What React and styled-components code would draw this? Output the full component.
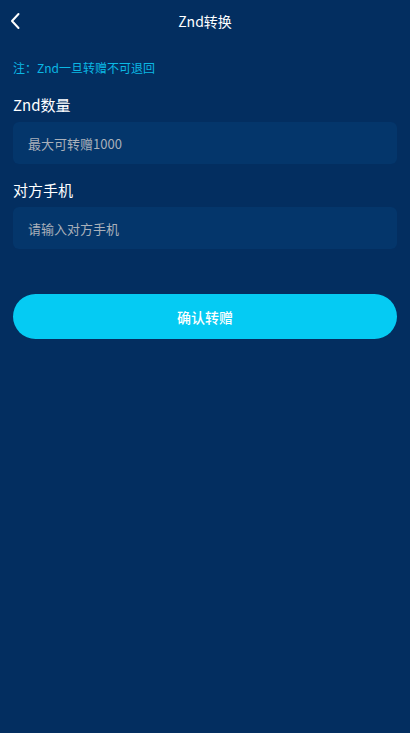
import React from "react";
import styled, { createGlobalStyle } from "styled-components";

const Global = createGlobalStyle`
  html, body { margin: 0; padding: 0; background: #032e60; }
  body { font-family: "Microsoft YaHei", "Noto Sans CJK SC", "Liberation Sans", sans-serif; }
  * { box-sizing: border-box; }
`;

const Page = styled.div`
  min-height: 733px;
  background: #032e60;
  color: #fff;
`;

const Header = styled.header`
  position: relative;
  height: 44px;
  display: flex;
  align-items: center;
  justify-content: center;
`;

const Back = styled.button`
  position: absolute;
  left: 6px;
  top: 10px;
  width: 18px;
  height: 22px;
  padding: 0;
  border: 0;
  background: transparent;
  display: flex;
  align-items: center;
  justify-content: center;
`;

const Title = styled.h1`
  margin: 0;
  font-size: 14px;
  font-weight: 400;
  color: #fff;
  line-height: 20px;
  margin-top: -2px;
`;

const Body = styled.main`
  padding: 15px 13px 0;
  display: flex;
  flex-direction: column;
`;

const Note = styled.p`
  margin: 0;
  font-size: 12px;
  line-height: 18px;
  color: #0bb8e4;
`;

const Field = styled.div`
  display: flex;
  flex-direction: column;
  margin-top: ${(p) => p.$top}px;
`;

const Label = styled.label`
  font-size: 15px;
  line-height: 20px;
  color: #fff;
  margin-bottom: 7px;
`;

const Input = styled.input`
  height: 42px;
  border: 0;
  outline: none;
  border-radius: 6px;
  background: #04366b;
  padding: 0 15px;
  font-family: inherit;
  font-size: 13px;
  color: #fff;
  &::placeholder { color: #a9b0ba; }
`;

const Submit = styled.button`
  margin-top: 45px;
  height: 45px;
  border: 0;
  border-radius: 23px;
  background: #05cbf3;
  color: #fff;
  font-family: inherit;
  font-size: 14px;
  font-weight: 500;
`;

export default function App() {
  return (
    <Page>
      <Global />
      <Header>
        <Back aria-label="返回">
          <svg width="12" height="18" viewBox="0 0 12 18" fill="none">
            <path d="M9.5 2 L3 9 L9.5 16" stroke="#fff" strokeWidth="2" strokeLinecap="round" strokeLinejoin="round" />
          </svg>
        </Back>
        <Title>Znd转换</Title>
      </Header>
      <Body>
        <Note>注：Znd一旦转赠不可退回</Note>
        <Field $top={18}>
          <Label>Znd数量</Label>
          <Input placeholder="最大可转赠1000" />
        </Field>
        <Field $top={16}>
          <Label>对方手机</Label>
          <Input placeholder="请输入对方手机" />
        </Field>
        <Submit>确认转赠</Submit>
      </Body>
    </Page>
  );
}
